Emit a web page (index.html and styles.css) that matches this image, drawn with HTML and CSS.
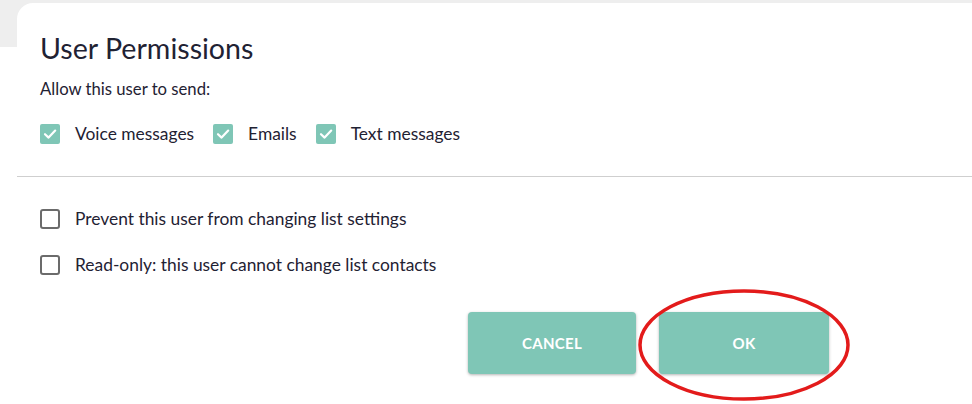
FILE: index.html
```html
<!DOCTYPE html>
<html>
<head>
  <link rel="stylesheet" href="styles.css">
</head>
<body>
  <div class="backdrop"></div>
  <div class="dialog">
    <div class="section">
      <h2 class="title">User Permissions</h2>
      <div class="subtitle">Allow this user to send:</div>
      <div class="check-row">
        <label class="check">
          <span class="box checked">
            <svg viewBox="0 0 20 20" width="20" height="20"><path d="M5 10.2l3.6 3.4 6.6-7" fill="none" stroke="#fff" stroke-width="2.2" stroke-linecap="round" stroke-linejoin="round"/></svg>
          </span>
          Voice messages
        </label>
        <label class="check">
          <span class="box checked">
            <svg viewBox="0 0 20 20" width="20" height="20"><path d="M5 10.2l3.6 3.4 6.6-7" fill="none" stroke="#fff" stroke-width="2.2" stroke-linecap="round" stroke-linejoin="round"/></svg>
          </span>
          Emails
        </label>
        <label class="check">
          <span class="box checked">
            <svg viewBox="0 0 20 20" width="20" height="20"><path d="M5 10.2l3.6 3.4 6.6-7" fill="none" stroke="#fff" stroke-width="2.2" stroke-linecap="round" stroke-linejoin="round"/></svg>
          </span>
          Text messages
        </label>
      </div>
    </div>
    <hr class="divider">
    <div class="section options">
      <label class="check"><span class="box"></span>Prevent this user from changing list settings</label>
      <label class="check"><span class="box"></span>Read-only: this user cannot change list contacts</label>
    </div>
    <div class="actions">
      <button class="btn">CANCEL</button>
      <button class="btn ok">OK
        <svg class="circle" width="216" height="116" viewBox="0 0 216 116"><ellipse cx="108" cy="58" rx="104" ry="54" fill="none" stroke="#e31b1b" stroke-width="3.5"/></svg>
      </button>
    </div>
  </div>
</body>
</html>
```

FILE: styles.css
```css
html, body {
  margin: 0;
  height: 100%;
  overflow: hidden;
}
body {
  background: #fff;
  font-family: "Source Sans Pro", Lato, "Noto Sans", sans-serif;
  color: #1f2233;
  position: relative;
}
.backdrop {
  position: absolute;
  top: 0;
  left: 0;
  right: 0;
  height: 47px;
  background: #eeeeee;
}
.dialog {
  position: relative;
  margin: 3px 0 0 17px;
  background: #fff;
  border-top-left-radius: 16px;
  height: 420px;
}
.section {
  padding: 0 23px;
}
.title {
  margin: 0;
  padding-top: 28px;
  font-size: 28.6px;
  font-weight: 400;
  line-height: 34px;
}
.subtitle {
  margin-top: 14px;
  font-size: 16.7px;
  line-height: 20px;
}
.check-row {
  display: flex;
  gap: 19px;
  margin-top: 25px;
}
.check {
  display: flex;
  align-items: center;
  gap: 15px;
  font-size: 17.4px;
  line-height: 20px;
}
.box {
  width: 20px;
  height: 20px;
  box-sizing: border-box;
  border: 2px solid #6b6b6b;
  border-radius: 3px;
  flex: none;
}
.box.checked {
  border: none;
  background: #7fc6b6;
  border-radius: 2px;
}
.box svg {
  display: block;
}
.divider {
  margin: 32px 0 0;
  border: none;
  border-top: 1px solid #cfcfcf;
}
.options {
  display: flex;
  flex-direction: column;
  gap: 26px;
  padding-top: 32px;
}
.actions {
  display: flex;
  gap: 23px;
  padding-left: 451px;
  margin-top: 37px;
}
.btn {
  position: relative;
  width: 168px;
  height: 62px;
  border: none;
  border-radius: 4px;
  background: #7fc6b6;
  color: #fff;
  font-family: inherit;
  font-size: 15px;
  font-weight: 700;
  letter-spacing: 0.3px;
  box-shadow: 0 1px 3px rgba(0, 0, 0, 0.3);
}
.btn.ok {
  width: 170px;
}
.circle {
  position: absolute;
  left: -23px;
  top: -25px;
}
```
